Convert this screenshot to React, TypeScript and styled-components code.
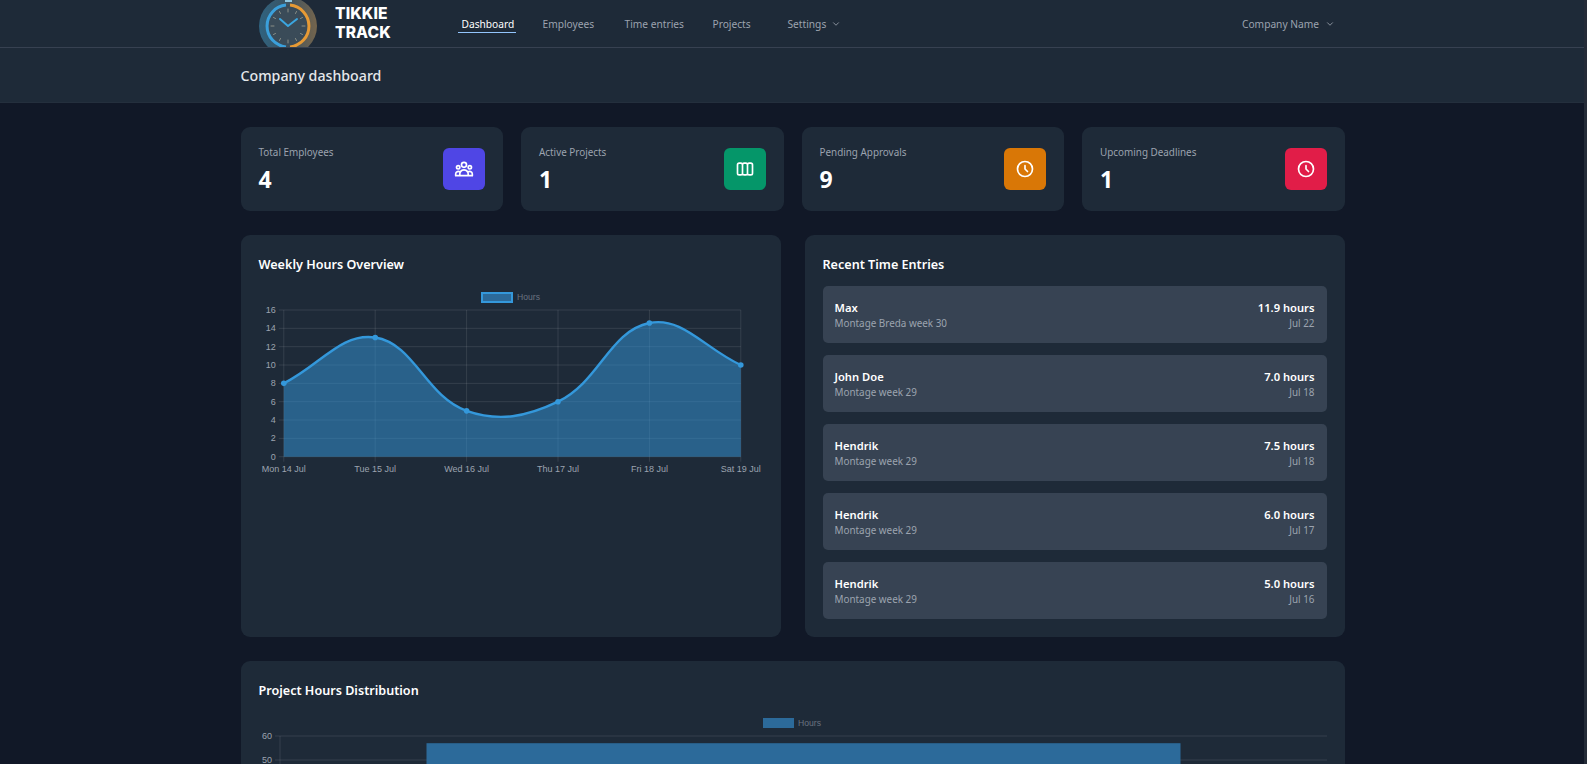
import React from "react";
import styled, { createGlobalStyle } from "styled-components";
import { HiOutlineUserGroup, HiOutlineViewBoards, HiOutlineClock } from "react-icons/hi";
import { ChevronDown } from "lucide-react";

const Global = createGlobalStyle`
  html, body { margin: 0; padding: 0; height: 100%; overflow: hidden; background: #111827; }
  * { box-sizing: border-box; }
`;

const FONT = `"Noto Sans", "Open Sans", sans-serif`;
const SURFACE = "#1e2a38";

const Page = styled.div`
  position: relative;
  width: 1587px;
  height: 764px;
  overflow: hidden;
  background: #111827;
  font-family: ${FONT};
  color: #fff;
`;
const Scrollbar = styled.div`
  position: absolute;
  top: 0;
  right: 0;
  bottom: 0;
  width: 3px;
  background: #252c38;
`;
const Nav = styled.header`
  height: 48px;
  background: ${SURFACE};
  border-bottom: 1px solid #374151;
  display: flex;
  align-items: stretch;
  overflow: hidden;
  padding-left: 259px;
  padding-right: 252px;
`;
const LogoBox = styled.div`
  display: flex;
  align-items: center;
  width: 202.5px;
  gap: 16px;
`;
const Wordmark = styled.div`
  font-family: Inter, sans-serif;
  font-weight: 800;
  font-size: 15.6px;
  line-height: 19.5px;
  margin-top: -1px;
  letter-spacing: 0.1px;
`;
const NavLinks = styled.nav`
  display: flex;
  align-items: center;
  flex: 1;
`;
const NavLink = styled.a<{ $active?: boolean; $w: number }>`
  position: relative;
  width: ${(p) => p.$w}px;
  font-size: 10.2px;
  line-height: 16px;
  white-space: nowrap;
  color: ${(p) => (p.$active ? "#fff" : "#9ca3af")};
  display: flex;
  align-items: center;
  gap: 5px;
  ${(p) =>
    p.$active &&
    `&::after { content: ""; position: absolute; left: -3.5px; width: 58px; bottom: -1px; height: 1px; background: #93c5fd; }`}
`;
const CompanyMenu = styled.div`
  display: flex;
  align-items: center;
  gap: 6px;
  font-size: 10.2px;
  color: #9ca3af;
`;
const SubHeader = styled.div`
  height: 55px;
  background: ${SURFACE};
  border-bottom: 1px solid #242f3d;
  display: flex;
  align-items: center;
  padding-left: 240.5px;
`;
const PageTitle = styled.h1`
  margin: 0;
  font-size: 14.2px;
  font-weight: 500;
  color: #e5e7eb;
`;
const Main = styled.main`
  width: 1104px;
  margin-left: 240.5px;
  padding-top: 24px;
  display: flex;
  flex-direction: column;
  gap: 24px;
`;
const StatRow = styled.section`
  display: grid;
  grid-template-columns: repeat(4, 1fr);
  gap: 18px;
`;
const StatCard = styled.div`
  height: 84px;
  border-radius: 9px;
  background: ${SURFACE};
  padding: 0 18px;
  display: flex;
  align-items: center;
  justify-content: space-between;
`;
const StatText = styled.div`
  display: flex;
  flex-direction: column;
`;
const StatLabel = styled.span`
  font-size: 9.9px;
  line-height: 16px;
  color: #9ca3af;
  margin-top: -1px;
`;
const StatValue = styled.span`
  font-size: 23px;
  line-height: 30px;
  font-weight: 700;
  color: #fff;
  margin-top: 4px;
`;
const IconTile = styled.div<{ $bg: string }>`
  width: 42px;
  height: 42px;
  border-radius: 6px;
  background: ${(p) => p.$bg};
  color: #fff;
  display: flex;
  align-items: center;
  justify-content: center;
`;
const TwoCols = styled.section`
  display: grid;
  grid-template-columns: 540px 540px;
  gap: 24px;
`;
const Card = styled.div`
  background: ${SURFACE};
  border-radius: 9px;
  padding: 18px;
`;
const CardTall = styled(Card)`
  height: 402px;
`;
const CardTitle = styled.h2`
  margin: 0 0 9px;
  font-size: 12.6px;
  line-height: 24px;
  font-weight: 600;
  color: #fff;
`;
const EntryList = styled.div`
  display: flex;
  flex-direction: column;
  gap: 12px;
`;
const Entry = styled.div`
  height: 57px;
  background: #374353;
  border-radius: 5px;
  padding: 2px 12px 0;
  display: flex;
  align-items: center;
  justify-content: space-between;
`;
const EntryCol = styled.div<{ $right?: boolean }>`
  display: flex;
  flex-direction: column;
  align-items: ${(p) => (p.$right ? "flex-end" : "flex-start")};
`;
const EntryStrong = styled.span`
  font-size: 11.2px;
  line-height: 16px;
  font-weight: 600;
  color: #fff;
`;
const EntrySub = styled.span`
  font-size: 9.9px;
  line-height: 15px;
  color: #9ca3af;
`;
const ChartSvg = styled.svg`
  display: block;
`;

const TICK = `"Liberation Sans", Arial, sans-serif`;
const GRID = "rgba(255,255,255,0.1)";
const FILL = "#2c6a9a";
const LINE = "#3498db";

function Logo() {
  return (
    <svg width="60" height="47" viewBox="0 0 60 47" style={{ flex: "none" }}>
      <defs>
        <linearGradient id="face" x1="0" x2="1" y1="0" y2="0">
          <stop offset="0" stopColor="#2f6380" />
          <stop offset="0.5" stopColor="#3c5260" />
          <stop offset="1" stopColor="#75654d" />
        </linearGradient>
      </defs>
      <circle cx="29" cy="26" r="29" fill="url(#face)" />
      <circle cx="29" cy="26" r="21" fill="#3a4b58" />
      <path d="M27 5.1 A21 21 0 0 0 27 46.9" fill="none" stroke="#3ba0db" strokeWidth="3" />
      <path d="M31 5.1 A21 21 0 0 1 31 46.9" fill="none" stroke="#e69a35" strokeWidth="3" />
      <rect x="26" y="0" width="7" height="2" fill="#8fc6e0" />
      <path d="M21 19 L29 26 L38 19" fill="none" stroke="#3ba6e0" strokeWidth="2" strokeLinecap="round" strokeLinejoin="round" />
      <g stroke="#8a8f86" strokeWidth="1" strokeLinecap="round">
        <path d="M29 9v3M29 40v3M12 26h3M43 26h3M20.5 11.5l1 2M37.5 11.5l-1 2M14.5 17.5l2 1M43.5 17.5l-2 1M14.5 34.5l2-1M43.5 34.5l-2-1M20.5 40.5l1-2M37.5 40.5l-1-2" />
      </g>
    </svg>
  );
}

function splinePath(pts: [number, number][], t = 0.4) {
  const ctrl = pts.map((cur, i) => {
    const prev = pts[i - 1] ?? cur;
    const next = pts[i + 1] ?? cur;
    const d01 = Math.hypot(cur[0] - prev[0], cur[1] - prev[1]);
    const d12 = Math.hypot(next[0] - cur[0], next[1] - cur[1]);
    const tot = d01 + d12 || 1;
    const fa = (t * d01) / tot;
    const fb = (t * d12) / tot;
    return {
      p: [cur[0] - fa * (next[0] - prev[0]), cur[1] - fa * (next[1] - prev[1])],
      n: [cur[0] + fb * (next[0] - prev[0]), cur[1] + fb * (next[1] - prev[1])],
    };
  });
  let d = `M${pts[0][0]} ${pts[0][1]}`;
  for (let i = 1; i < pts.length; i++) {
    d += ` C${ctrl[i - 1].n[0]} ${ctrl[i - 1].n[1]} ${ctrl[i].p[0]} ${ctrl[i].p[1]} ${pts[i][0]} ${pts[i][1]}`;
  }
  return d;
}

function LineChart() {
  const left = 24.8;
  const step = 91.4;
  const top = 24;
  const unit = 9.17;
  const bottom = top + 16 * unit;
  const right = left + 5 * step;
  const data = [8, 13, 5, 6, 14.58, 10];
  const labels = ["Mon 14 Jul", "Tue 15 Jul", "Wed 16 Jul", "Thu 17 Jul", "Fri 18 Jul", "Sat 19 Jul"];
  const pts = data.map((v, i) => [left + i * step, bottom - v * unit] as [number, number]);
  const curve = splinePath(pts);
  return (
    <ChartSvg width="504" height="200" viewBox="0 0 504 200">
      <rect x="223" y="7" width="30" height="9" fill={FILL} stroke={LINE} strokeWidth="2" />
      <text x="258" y="14" fontFamily={TICK} fontSize="8.6" fill="#6b7280">Hours</text>
      {[16, 14, 12, 10, 8, 6, 4, 2, 0].map((v) => (
        <g key={v}>
          <line x1={left - 5} x2={right} y1={bottom - v * unit} y2={bottom - v * unit} stroke={GRID} />
          <text x={left - 8} y={bottom - v * unit + 3} textAnchor="end" fontFamily={TICK} fontSize="9" fill="#9ca3af">{v}</text>
        </g>
      ))}
      {labels.map((l, i) => (
        <g key={l}>
          <line x1={left + i * step} x2={left + i * step} y1={top} y2={bottom + 5} stroke={GRID} />
          <text x={left + i * step} y={bottom + 15.5} textAnchor="middle" fontFamily={TICK} fontSize="9" fill="#9ca3af">{l}</text>
        </g>
      ))}
      <path d={`${curve} L${right} ${bottom} L${left} ${bottom} Z`} fill={LINE} fillOpacity="0.5" />
      <path d={curve} fill="none" stroke={LINE} strokeWidth="2.4" />
      {pts.map((p, i) => (
        <circle key={i} cx={p[0]} cy={p[1]} r="2.8" fill={LINE} />
      ))}
    </ChartSvg>
  );
}

function BarChart() {
  const left = 21;
  const right = 1069;
  const top = 24;
  const unit = 2.4;
  const bottom = top + 60 * unit;
  return (
    <ChartSvg width="1068" height="200" viewBox="0 0 1068 200">
      <rect x="504" y="6" width="31" height="10" fill={FILL} />
      <text x="539" y="14" fontFamily={TICK} fontSize="8.6" fill="#6b7280">Hours</text>
      {[60, 50].map((v) => (
        <g key={v}>
          <line x1={left - 5} x2={right} y1={bottom - v * unit} y2={bottom - v * unit} stroke={GRID} />
          <text x={left - 8} y={bottom - v * unit + 3} textAnchor="end" fontFamily={TICK} fontSize="9" fill="#9ca3af">{v}</text>
        </g>
      ))}
      <line x1={left} x2={left} y1={top} y2={bottom + 5} stroke={GRID} />
      <rect x="167.5" y={bottom - 57 * unit} width="754" height={57 * unit} fill={FILL} />
    </ChartSvg>
  );
}

const stats = [
  { label: "Total Employees", value: "4", bg: "#4f46e5", Icon: HiOutlineUserGroup },
  { label: "Active Projects", value: "1", bg: "#059669", Icon: HiOutlineViewBoards },
  { label: "Pending Approvals", value: "9", bg: "#d97706", Icon: HiOutlineClock },
  { label: "Upcoming Deadlines", value: "1", bg: "#e11d48", Icon: HiOutlineClock },
];

const entries = [
  { name: "Max", project: "Montage Breda week 30", hours: "11.9 hours", date: "Jul 22" },
  { name: "John Doe", project: "Montage week 29", hours: "7.0 hours", date: "Jul 18" },
  { name: "Hendrik", project: "Montage week 29", hours: "7.5 hours", date: "Jul 18" },
  { name: "Hendrik", project: "Montage week 29", hours: "6.0 hours", date: "Jul 17" },
  { name: "Hendrik", project: "Montage week 29", hours: "5.0 hours", date: "Jul 16" },
];

export default function App() {
  return (
    <Page>
      <Global />
      <Nav>
        <LogoBox>
          <Logo />
          <Wordmark>
            TIKKIE
            <br />
            TRACK
          </Wordmark>
        </LogoBox>
        <NavLinks>
          <NavLink $active $w={81}>Dashboard</NavLink>
          <NavLink $w={82}>Employees</NavLink>
          <NavLink $w={88}>Time entries</NavLink>
          <NavLink $w={75}>Projects</NavLink>
          <NavLink $w={60}>
            Settings <ChevronDown size={10} />
          </NavLink>
        </NavLinks>
        <CompanyMenu>
          Company Name <ChevronDown size={10} />
        </CompanyMenu>
      </Nav>
      <SubHeader>
        <PageTitle>Company dashboard</PageTitle>
      </SubHeader>
      <Main>
        <StatRow>
          {stats.map(({ label, value, bg, Icon }) => (
            <StatCard key={label}>
              <StatText>
                <StatLabel>{label}</StatLabel>
                <StatValue>{value}</StatValue>
              </StatText>
              <IconTile $bg={bg}>
                <Icon size={20} />
              </IconTile>
            </StatCard>
          ))}
        </StatRow>
        <TwoCols>
          <CardTall>
            <CardTitle>Weekly Hours Overview</CardTitle>
            <LineChart />
          </CardTall>
          <CardTall>
            <CardTitle>Recent Time Entries</CardTitle>
            <EntryList>
              {entries.map((e, i) => (
                <Entry key={i}>
                  <EntryCol>
                    <EntryStrong>{e.name}</EntryStrong>
                    <EntrySub>{e.project}</EntrySub>
                  </EntryCol>
                  <EntryCol $right>
                    <EntryStrong>{e.hours}</EntryStrong>
                    <EntrySub>{e.date}</EntrySub>
                  </EntryCol>
                </Entry>
              ))}
            </EntryList>
          </CardTall>
        </TwoCols>
        <Card>
          <CardTitle>Project Hours Distribution</CardTitle>
          <BarChart />
        </Card>
      </Main>
      <Scrollbar />
    </Page>
  );
}
